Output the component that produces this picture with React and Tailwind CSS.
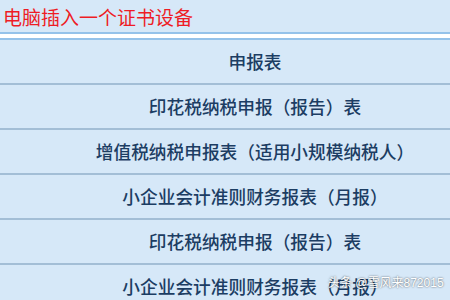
const rows = [
  "申报表",
  "印花税纳税申报（报告）表",
  "增值税纳税申报表（适用小规模纳税人）",
  "小企业会计准则财务报表（月报）",
  "印花税纳税申报（报告）表",
  "小企业会计准则财务报表（月报）",
]

export default function App() {
  return (
    <div className="relative w-[450px] h-[300px] overflow-hidden bg-[#d6e8f8] font-['Noto_Sans_CJK_SC',sans-serif]">
      {/* header */}
      <div className="h-[34px] pl-[3px] flex items-center border-b-2 border-[#94c2ea]">
        <span className="text-[#ee1c25] text-[19px] leading-none">电脑插入一个证书设备</span>
      </div>
      <div className="h-[6px] bg-white border-b-2 border-[#94c2ea]" />

      {/* table */}
      <div className="w-[510px]">
        {rows.map((r, i) => (
          <div
            key={i}
            className="h-[45px] flex items-center justify-center border-b-2 border-[#a3bed6] text-[#1c3d63] text-[17.7px] font-medium"
          >
            {r}
          </div>
        ))}
      </div>

      {/* watermark */}
      <div className="absolute left-[328px] top-[277px] whitespace-nowrap text-white text-[12px] leading-none [text-shadow:0_0_2px_rgba(0,0,0,0.7)] font-['Liberation_Sans','Noto_Sans_CJK_SC',sans-serif]">
        头条 @雪风来872015
      </div>
    </div>
  )
}
